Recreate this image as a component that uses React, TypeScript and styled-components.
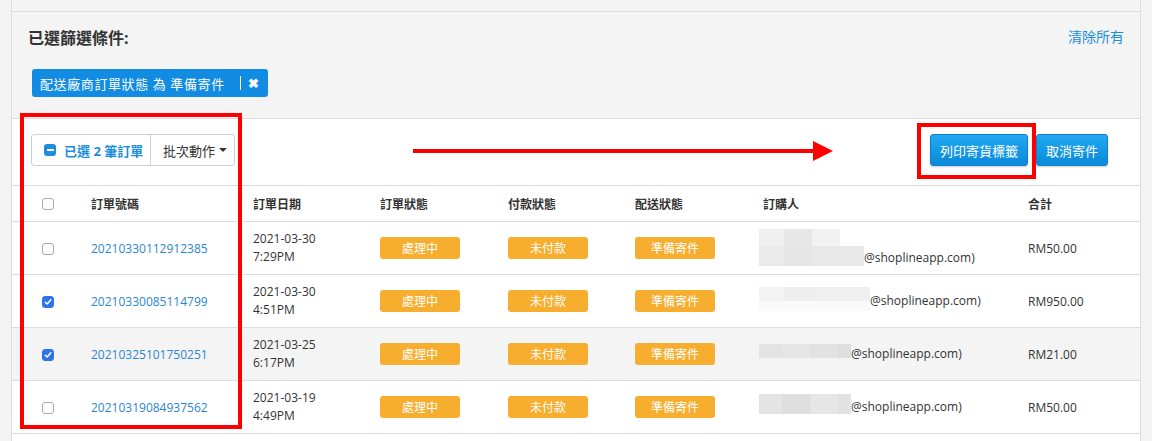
import React from "react";
import styled, { createGlobalStyle } from "styled-components";

const Global = createGlobalStyle`
  html, body { margin: 0; padding: 0; }
  body {
    background: #f4f4f4;
    font-family: "Open Sans", "Noto Sans CJK TC", sans-serif;
    color: #333;
    width: 1152px;
    height: 441px;
    overflow: hidden;
  }
  * { box-sizing: border-box; }
`;

const Page = styled.div`
  position: relative;
  padding: 0 11px;
  height: 441px;
`;

const Panel = styled.div`
  border-left: 1px solid #dcdcdc;
  border-right: 1px solid #dcdcdc;
  height: 100%;
  display: flex;
  flex-direction: column;
`;

const TopStub = styled.div`
  height: 12px;
  border-bottom: 1px solid #dcdcdc;
  background: #f4f4f4;
`;

const FilterSection = styled.section`
  background: #f4f4f4;
  height: 107px;
  border-bottom: 1px solid #dcdcdc;
  padding: 15px 16px 0 16px;
  display: flex;
  flex-direction: column;
  gap: 20px;
`;

const FilterHead = styled.div`
  display: flex;
  justify-content: space-between;
  align-items: center;
  height: 22px;
`;

const FilterTitle = styled.h3`
  margin: 0;
  font-size: 16px;
  font-weight: 700;
  color: #333;
  line-height: 22px;
`;

const ClearLink = styled.a`
  font-size: 14px;
  color: #1b8ee0;
  line-height: 20px;
  margin-top: -2px;
  text-decoration: none;
`;

const Chip = styled.div`
  align-self: flex-start;
  margin-left: 4px;
  height: 28px;
  background: #128ce2;
  border-radius: 3px;
  color: #fff;
  font-size: 13px;
  display: inline-flex;
  align-items: center;
  padding: 0 9px 0 8px;
  letter-spacing: 0.6px;
`;

const ChipSep = styled.span`
  width: 1px;
  height: 14px;
  background: #fff;
  margin: 0 7px 0 15px;
`;

const ChipClose = styled.span`
  font-size: 13px;
  font-weight: 700;
  line-height: 1;
`;

const TableSection = styled.section`
  background: #fff;
  flex: 1;
`;

const Toolbar = styled.div`
  height: 67px;
  border-bottom: 1px solid #dcdcdc;
  display: flex;
  justify-content: space-between;
  align-items: flex-start;
  padding: 15px 32px 0 19px;
`;

const BtnGroup = styled.div`
  display: flex;
  height: 32px;
  border: 1px solid #cfcfcf;
  border-radius: 3px;
  background: #fff;
`;

const GroupPart = styled.div<{ $w: number; $divider?: boolean }>`
  width: ${(p) => p.$w}px;
  display: flex;
  align-items: center;
  gap: 8px;
  padding-left: 12px;
  font-size: 13px;
  border-left: ${(p) => (p.$divider ? "1px solid #cfcfcf" : "none")};
`;

const SelectedText = styled.span`
  color: #1b8ee0;
  font-weight: 700;
`;

const MinusBox = styled.span`
  width: 12px;
  height: 12px;
  border-radius: 3px;
  background: #1b8ee0;
  display: inline-flex;
  align-items: center;
  justify-content: center;
  &::after {
    content: "";
    width: 7px;
    height: 2px;
    background: #fff;
  }
`;

const Caret = styled.span`
  width: 0;
  height: 0;
  border-left: 4px solid transparent;
  border-right: 4px solid transparent;
  border-top: 4px solid #333;
  margin-left: -4px;
`;

const Actions = styled.div`
  display: flex;
  gap: 8px;
`;

const PrimaryButton = styled.button<{ $w: number }>`
  height: 32px;
  width: ${(p) => p.$w}px;
  padding: 0;
  border: 1px solid #0c82cf;
  border-radius: 3px;
  background: linear-gradient(#22a8f2, #0a8ad9);
  box-shadow: 0 1px 2px rgba(0, 0, 0, 0.2);
  color: #fff;
  font-family: "Open Sans", "Noto Sans CJK TC", sans-serif;
  font-size: 13px;
`;

const COLS = "67px 162px 127px 128px 127px 128px 265px 124px";

const HeadRow = styled.div`
  display: grid;
  grid-template-columns: ${COLS};
  height: 36px;
  border-bottom: 1px solid #dcdcdc;
  align-items: center;
`;

const HeadCell = styled.div<{ $first?: boolean }>`
  padding-left: ${(p) => (p.$first ? 30 : 12)}px;
  font-size: 12px;
  font-weight: 600;
  color: #333;
  display: flex;
  align-items: center;
`;

const Row = styled.div<{ $hover?: boolean }>`
  display: grid;
  grid-template-columns: ${COLS};
  height: 53px;
  border-bottom: 1px solid #dcdcdc;
  align-items: center;
  background: ${(p) => (p.$hover ? "#f4f4f4" : "#fff")};
`;

const Cell = styled.div<{ $first?: boolean }>`
  padding-left: ${(p) => (p.$first ? 30 : 12)}px;
  font-size: 12px;
  color: #333;
  display: flex;
  align-items: center;
`;

const OrderLink = styled.a`
  color: #2b86d0;
  font-size: 12px;
  text-decoration: none;
`;

const DateText = styled.div`
  line-height: 18px;
  font-size: 12px;
  color: #333;
`;

const Badge = styled.span`
  width: 80px;
  height: 22px;
  border-radius: 3px;
  background: #f7ae2f;
  color: #fff;
  font-size: 12px;
  display: inline-flex;
  align-items: center;
  justify-content: center;
`;

const Box = styled.span<{ $checked?: boolean }>`
  width: 12px;
  height: 12px;
  border-radius: 3px;
  border: 1px solid ${(p) => (p.$checked ? "#2f73ea" : "#a9a9a9")};
  background: ${(p) => (p.$checked ? "#2f73ea" : "#fff")};
  display: inline-flex;
  align-items: center;
  justify-content: center;
  margin-top: 1px;
`;

const BuyerCell = styled.div`
  padding-left: 8px;
  display: flex;
  align-items: center;
  font-size: 12px;
  color: #333;
`;

const Blur = styled.div<{ $shift: number }>`
  display: flex;
  flex-direction: column;
  transform: translateY(${(p) => p.$shift}px);
`;

const BlurLine = styled.div<{ $h: number }>`
  display: flex;
  height: ${(p) => p.$h}px;
`;

const BlurCell = styled.span<{ $w: number; $c: string }>`
  width: ${(p) => p.$w}px;
  background: ${(p) => p.$c};
`;

const Email = styled.span<{ $shift: number }>`
  transform: translateY(${(p) => p.$shift}px);
  line-height: 18px;
`;

const Annot = styled.div`
  position: absolute;
  border: 4px solid #ff0000;
  pointer-events: none;
`;

const ArrowSvg = styled.svg`
  position: absolute;
  left: 413px;
  top: 140px;
`;

function Check({ checked }: { checked?: boolean }) {
  return (
    <Box $checked={checked}>
      {checked && (
        <svg width="8" height="8" viewBox="0 0 8 8">
          <path d="M1.3 4.2 L3.2 6 L6.8 1.8" stroke="#fff" strokeWidth="1.5" fill="none" strokeLinecap="round" strokeLinejoin="round" />
        </svg>
      )}
    </Box>
  );
}

type BlurSpec = { shift: number; textShift: number; lines: { h: number; cells: [number, string][] }[] };

const rows: {
  id: string;
  date: string;
  time: string;
  checked: boolean;
  hover?: boolean;
  total: string;
  blur: BlurSpec;
}[] = [
  {
    id: "20210330112912385",
    date: "2021-03-30",
    time: "7:29PM",
    checked: false,
    total: "RM50.00",
    blur: {
      shift: -1,
      textShift: 10,
      lines: [
        { h: 17, cells: [[25, "#efefef"], [28, "#e7e7e7"], [28, "#f2f2f2"], [24, "transparent"]] },
        { h: 20, cells: [[25, "#eaeaea"], [28, "#e5e5e5"], [52, "#e8e8e8"]] },
      ],
    },
  },
  {
    id: "20210330085114799",
    date: "2021-03-30",
    time: "4:51PM",
    checked: true,
    total: "RM950.00",
    blur: {
      shift: -2,
      textShift: 0,
      lines: [
        { h: 14, cells: [[25, "#f3f3f3"], [28, "#eeeeee"], [58, "#efefef"]] },
        { h: 10, cells: [[111, "#fafafa"]] },
      ],
    },
  },
  {
    id: "20210325101750251",
    date: "2021-03-25",
    time: "6:17PM",
    checked: true,
    hover: true,
    total: "RM21.00",
    blur: {
      shift: -3,
      textShift: 0,
      lines: [{ h: 14, cells: [[23, "#e3e3e3"], [28, "#e6e6e6"], [28, "#e2e2e2"], [13, "#dedede"]] }],
    },
  },
  {
    id: "20210319084937562",
    date: "2021-03-19",
    time: "4:49PM",
    checked: false,
    total: "RM50.00",
    blur: {
      shift: -3,
      textShift: 0,
      lines: [
        { h: 20, cells: [[23, "#e4e4e4"], [28, "#dedede"], [28, "#e6e6e6"], [13, "#e2e2e2"]] },
      ],
    },
  },
];

export default function App() {
  return (
    <>
      <Global />
      <Page>
        <Panel>
          <TopStub />
          <FilterSection>
            <FilterHead>
              <FilterTitle>已選篩選條件:</FilterTitle>
              <ClearLink>清除所有</ClearLink>
            </FilterHead>
            <Chip>
              配送廠商訂單狀態 為 準備寄件
              <ChipSep />
              <ChipClose>✖</ChipClose>
            </Chip>
          </FilterSection>
          <TableSection>
            <Toolbar>
              <BtnGroup>
                <GroupPart $w={118}>
                  <MinusBox />
                  <SelectedText>已選 2 筆訂單</SelectedText>
                </GroupPart>
                <GroupPart $w={84} $divider>
                  批次動作
                  <Caret />
                </GroupPart>
              </BtnGroup>
              <Actions>
                <PrimaryButton $w={98}>列印寄貨標籤</PrimaryButton>
                <PrimaryButton $w={72}>取消寄件</PrimaryButton>
              </Actions>
            </Toolbar>
            <HeadRow>
              <HeadCell $first>
                <Check />
              </HeadCell>
              <HeadCell>訂單號碼</HeadCell>
              <HeadCell>訂單日期</HeadCell>
              <HeadCell>訂單狀態</HeadCell>
              <HeadCell>付款狀態</HeadCell>
              <HeadCell>配送狀態</HeadCell>
              <HeadCell>訂購人</HeadCell>
              <HeadCell>合計</HeadCell>
            </HeadRow>
            {rows.map((r) => (
              <Row key={r.id} $hover={r.hover}>
                <Cell $first>
                  <Check checked={r.checked} />
                </Cell>
                <Cell>
                  <OrderLink>{r.id}</OrderLink>
                </Cell>
                <Cell>
                  <DateText>
                    {r.date}
                    <br />
                    {r.time}
                  </DateText>
                </Cell>
                <Cell>
                  <Badge>處理中</Badge>
                </Cell>
                <Cell>
                  <Badge>未付款</Badge>
                </Cell>
                <Cell>
                  <Badge>準備寄件</Badge>
                </Cell>
                <BuyerCell>
                  <Blur $shift={r.blur.shift}>
                    {r.blur.lines.map((l, i) => (
                      <BlurLine key={i} $h={l.h}>
                        {l.cells.map(([w, c], j) => (
                          <BlurCell key={j} $w={w} $c={c} />
                        ))}
                      </BlurLine>
                    ))}
                  </Blur>
                  <Email $shift={r.blur.textShift}>@shoplineapp.com)</Email>
                </BuyerCell>
                <Cell>{r.total}</Cell>
              </Row>
            ))}
          </TableSection>
        </Panel>
        <Annot style={{ left: 20, top: 113, width: 222, height: 316 }} />
        <Annot style={{ left: 917, top: 123, width: 119, height: 56 }} />
        <ArrowSvg width="421" height="22" viewBox="0 0 421 22">
          <rect x="0" y="9" width="401" height="4" fill="#ff0000" />
          <polygon points="400,1 420,11 400,21" fill="#ff0000" />
        </ArrowSvg>
      </Page>
    </>
  );
}
